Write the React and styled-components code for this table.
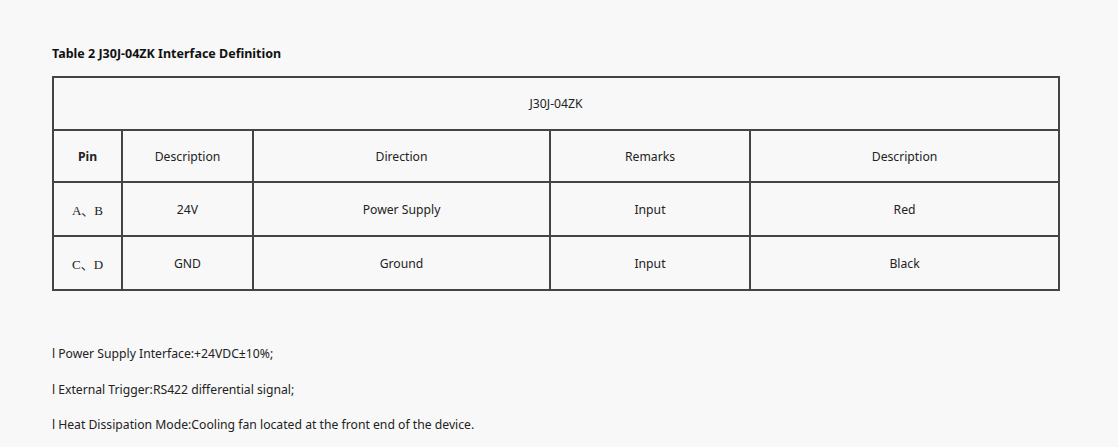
import React from 'react';
import styled, { createGlobalStyle } from 'styled-components';

const GlobalStyle = createGlobalStyle`
  html, body {
    margin: 0;
    padding: 0;
    background: #f8f8f8;
  }
  body {
    font-family: "Noto Sans", "Open Sans", sans-serif;
    color: #222;
  }
`;

const columns = [69, 131, 297, 200, 309];

const rows = [
  { pin: 'A、B', desc: '24V', dir: 'Power Supply', remarks: 'Input', color: 'Red' },
  { pin: 'C、D', desc: 'GND', dir: 'Ground', remarks: 'Input', color: 'Black' },
];

const notes = [
  'Power Supply Interface:+24VDC±10%;',
  'External Trigger:RS422 differential signal;',
  'Heat Dissipation Mode:Cooling fan located at the front end of the device.',
];

const Page = styled.div`
  padding: 44px 0 0 52px;
  width: 1006px;
`;

const Title = styled.h4`
  margin: 0 0 13px;
  font-size: 12.5px;
  font-weight: 700;
  line-height: 19px;
  color: #111;
`;

const Table = styled.table`
  border-collapse: collapse;
  table-layout: fixed;
  width: 1006px;
  font-size: 12.2px;
`;

const Cell = styled.td`
  border: 2px solid #444;
  height: ${(p) => p.$h || 52}px;
  padding: 0;
  text-align: center;
  vertical-align: middle;
  font-weight: ${(p) => (p.$bold ? 700 : 400)};
  font-family: ${(p) => (p.$serif ? '"Liberation Serif", "Noto Sans CJK SC", serif' : 'inherit')};
  font-size: ${(p) => (p.$serif ? '13px' : 'inherit')};
`;

const Notes = styled.div`
  margin-top: 54px;
  display: flex;
  flex-direction: column;
  gap: 17px;
`;

const Note = styled.p`
  margin: 0;
  font-size: 12.2px;
  line-height: 18.5px;
  &::before {
    content: 'l';
    margin-right: 3px;
  }
`;

export default function App() {
  return (
    <>
      <GlobalStyle />
      <Page>
        <Title>Table 2 J30J-04ZK Interface Definition</Title>
        <Table>
          <colgroup>
            {columns.map((w, i) => (
              <col key={i} style={{ width: w }} />
            ))}
          </colgroup>
          <tbody>
            <tr>
              <Cell colSpan={5} $h={51}>J30J-04ZK</Cell>
            </tr>
            <tr>
              <Cell $bold $h={50}>Pin</Cell>
              <Cell $h={50}>Description</Cell>
              <Cell $h={50}>Direction</Cell>
              <Cell $h={50}>Remarks</Cell>
              <Cell $h={50}>Description</Cell>
            </tr>
            {rows.map((r) => (
              <tr key={r.pin}>
                <Cell $serif $h={52}>{r.pin}</Cell>
                <Cell $h={52}>{r.desc}</Cell>
                <Cell $h={52}>{r.dir}</Cell>
                <Cell $h={52}>{r.remarks}</Cell>
                <Cell $h={52}>{r.color}</Cell>
              </tr>
            ))}
          </tbody>
        </Table>
        <Notes>
          {notes.map((n) => (
            <Note key={n}>{n}</Note>
          ))}
        </Notes>
      </Page>
    </>
  );
}
